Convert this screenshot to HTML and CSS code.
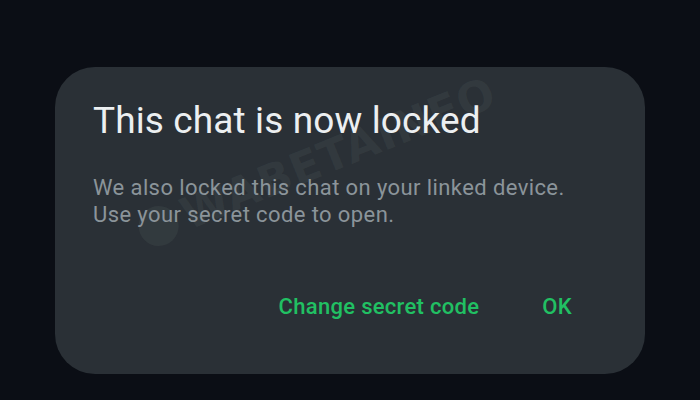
FILE: index.html
```html
<!DOCTYPE html>
<html>
<head>
<meta charset="utf-8">
<link rel="stylesheet" href="styles.css">
</head>
<body>
<div class="screen">
  <div class="dialog">
    <div class="watermark" aria-hidden="true"><span class="wm-logo"></span>WABETAINFO</div>
    <h1 class="title">This chat is now locked</h1>
    <p class="message">We also locked this chat on your linked device.<br>Use your secret code to open.</p>
    <div class="actions">
      <button class="action">Change secret code</button>
      <button class="action">OK</button>
    </div>
  </div>
</div>
</body>
</html>
```
FILE: styles.css
```css
html, body {
  margin: 0;
  padding: 0;
  background: #0b0e15;
}
.screen {
  width: 700px;
  height: 400px;
  padding: 67px 55px 0 55px;
  box-sizing: border-box;
  font-family: Roboto, "Noto Sans", sans-serif;
}
.dialog {
  position: relative;
  overflow: hidden;
  height: 307px;
  box-sizing: border-box;
  background: #2a3036;
  border-radius: 40px;
  padding: 32px 73px 0 38px;
  display: flex;
  flex-direction: column;
}
.title {
  position: relative;
  margin: 0;
  font-size: 37px;
  font-weight: 400;
  line-height: 44px;
  letter-spacing: 0.12px;
  color: #eceff1;
}
.message {
  position: relative;
  margin: 31px 0 0 0;
  font-size: 22px;
  line-height: 27px;
  letter-spacing: 0.4px;
  color: #8b949a;
}
.actions {
  position: relative;
  margin-top: 65px;
  display: flex;
  justify-content: flex-end;
  gap: 63px;
}
.action {
  background: none;
  border: none;
  padding: 0;
  font-family: Roboto, "Noto Sans", sans-serif;
  font-size: 22px;
  font-weight: 500;
  line-height: 27px;
  letter-spacing: 0.3px;
  color: #21c063;
}
.watermark {
  position: absolute;
  left: 262px;
  top: 95px;
  transform: translate(-50%, -50%) rotate(-22deg);
  font-family: "DejaVu Sans", sans-serif;
  font-weight: 700;
  font-size: 44px;
  line-height: 48px;
  letter-spacing: 1px;
  color: rgba(130, 150, 140, 0.1);
  display: flex;
  align-items: center;
  gap: 6px;
  white-space: nowrap;
  pointer-events: none;
}
.wm-logo {
  width: 40px;
  height: 40px;
  border-radius: 50%;
  background: rgba(130, 150, 140, 0.1);
}
```
